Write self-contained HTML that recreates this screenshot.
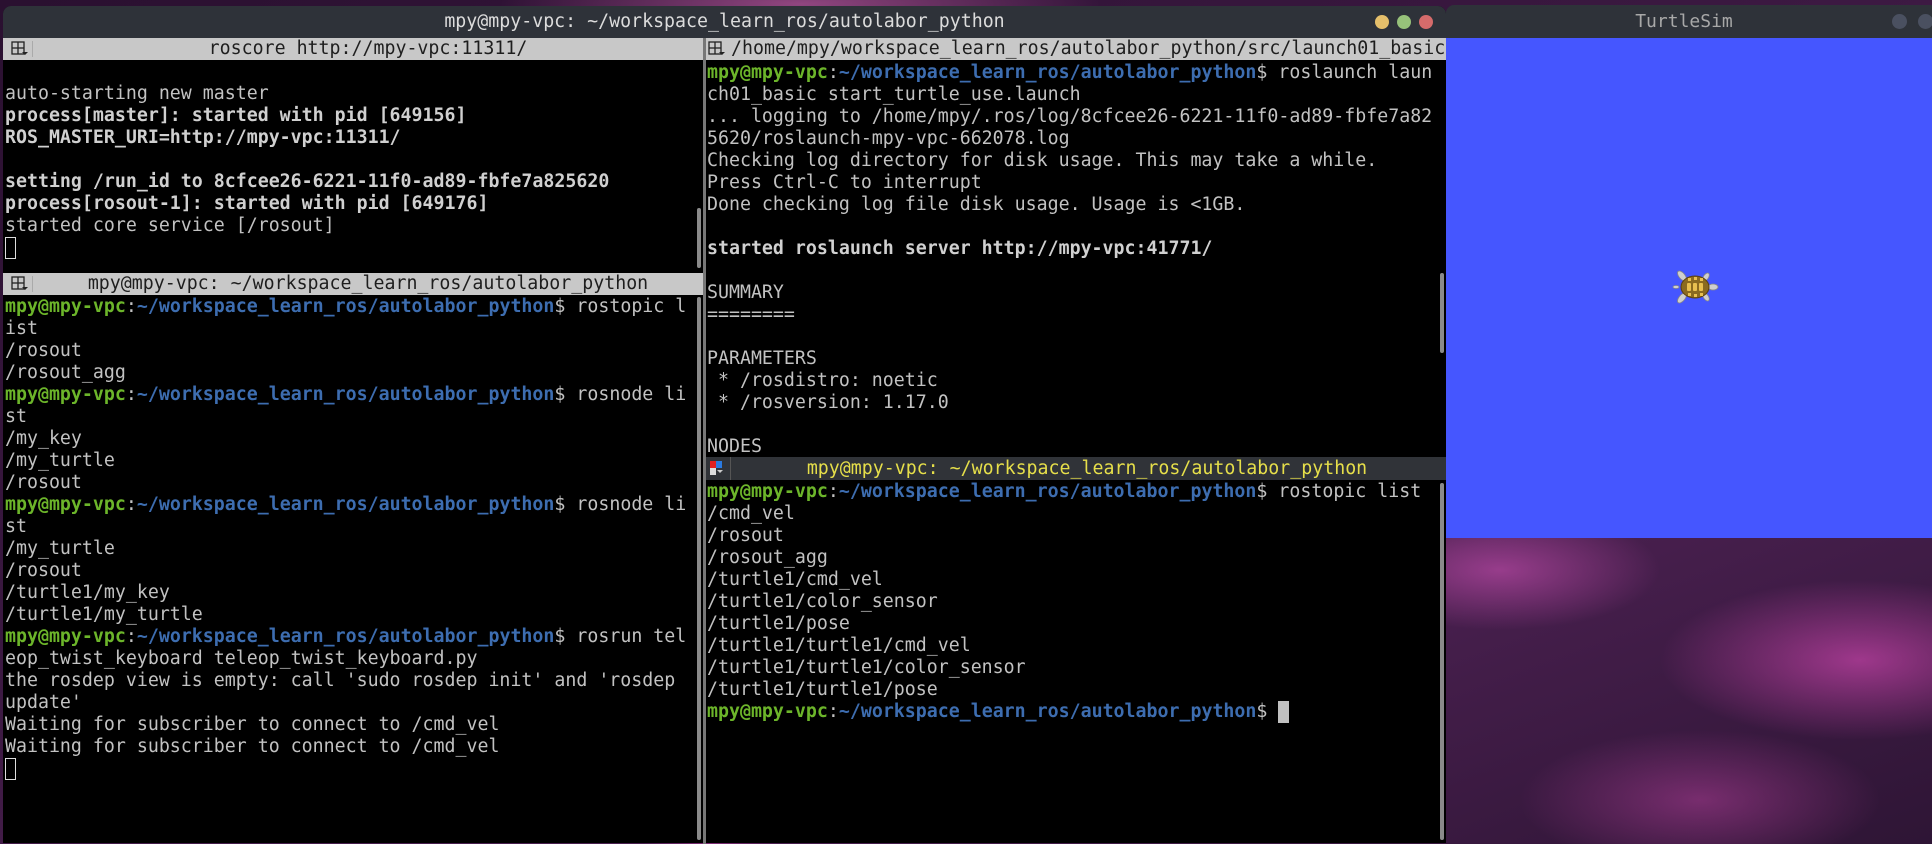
<!DOCTYPE html>
<html><head><meta charset="utf-8"><style>
*{margin:0;padding:0;box-sizing:border-box}
body{width:1932px;height:844px;overflow:hidden;position:relative;background:#2a1030;font-family:"DejaVu Sans Mono","Liberation Mono",monospace}
.abs{position:absolute}
.wall{position:absolute;inset:0;background:
linear-gradient(150deg,transparent 0,transparent 62%,rgba(230,70,190,.35) 64%,transparent 66%),
radial-gradient(ellipse 160px 60px at 1500px 570px,rgba(230,90,200,.5),transparent),
radial-gradient(ellipse 200px 80px at 1860px 660px,rgba(240,80,200,.55),transparent),
radial-gradient(ellipse 180px 70px at 1700px 800px,rgba(200,70,170,.45),transparent),
radial-gradient(ellipse 300px 40px at 800px 4px,rgba(240,120,200,.5),transparent),
linear-gradient(160deg,#2a1030 0%,#3a1840 40%,#4a2050 70%,#2e1535 100%)}
pre{font-family:"DejaVu Sans Mono","Liberation Mono",monospace;font-size:18.25px;line-height:22px;color:#c2c2c2;white-space:pre}
b{font-weight:bold;color:#d0d0d0}
.g{color:#6cb52a;font-weight:bold}
.bl{color:#3d6db0;font-weight:bold}
.hdr{position:absolute;height:22px;background:#c8c8c8;color:#1e1e1e;font-size:18.25px;line-height:22px}
.ico{position:absolute;left:4px;top:3px;width:26px;height:16px;border-right:1px solid #aaa}
.sb{position:absolute;width:4px;background:#8a8a8a;border-radius:2px}
.cur{display:inline-block;width:11px;height:22px;border:1.5px solid #ddd;vertical-align:top}
</style></head><body>
<div class="wall"></div>

<div class="abs" style="left:3px;top:6px;width:1443px;height:837px;background:#000;border-radius:8px 8px 0 0;overflow:hidden">
  <div class="abs" style="left:0;top:0;width:1443px;height:32px;background:#2e3239;color:#dcdcdc;font-size:18.25px;line-height:32px;text-align:center">mpy@mpy-vpc: ~/workspace_learn_ros/autolabor_python</div>
  <div class="abs" style="left:1372px;top:9px;width:14px;height:14px;border-radius:50%;background:#e5bf6b"></div>
  <div class="abs" style="left:1394px;top:9px;width:14px;height:14px;border-radius:50%;background:#97c27a"></div>
  <div class="abs" style="left:1416px;top:9px;width:14px;height:14px;border-radius:50%;background:#d56b6b"></div>
</div>

<div class="hdr" style="left:3px;top:38px;width:700px;text-align:center;padding-left:30px"><div class="ico"><svg width="22" height="16"><rect x="3" y="1" width="12" height="12" fill="none" stroke="#222" stroke-width="1.3"/><line x1="9" y1="1" x2="9" y2="13" stroke="#222" stroke-width="1.3"/><line x1="3" y1="7" x2="15" y2="7" stroke="#222" stroke-width="1.3"/><path d="M13 11h6l-3 3z" fill="#222"/></svg></div>roscore http://mpy-vpc:11311/</div>
<pre class="abs" style="left:5px;top:83px">auto-starting new master
<b>process[master]: started with pid [649156]</b>
<b>ROS_MASTER_URI=http://mpy-vpc:11311/</b>

<b>setting /run_id to 8cfcee26-6221-11f0-ad89-fbfe7a825620</b>
<b>process[rosout-1]: started with pid [649176]</b>
started core service [/rosout]
<span class="cur"></span></pre>
<div class="sb" style="left:697px;top:208px;height:60px"></div>

<div class="hdr" style="left:3px;top:273px;width:700px;text-align:center;padding-left:30px"><div class="ico"><svg width="22" height="16"><rect x="3" y="1" width="12" height="12" fill="none" stroke="#222" stroke-width="1.3"/><line x1="9" y1="1" x2="9" y2="13" stroke="#222" stroke-width="1.3"/><line x1="3" y1="7" x2="15" y2="7" stroke="#222" stroke-width="1.3"/><path d="M13 11h6l-3 3z" fill="#222"/></svg></div>mpy@mpy-vpc: ~/workspace_learn_ros/autolabor_python</div>
<pre class="abs" style="left:5px;top:296px"><span class="g">mpy@mpy-vpc</span>:<span class="bl">~/workspace_learn_ros/autolabor_python</span>$ rostopic l
ist
/rosout
/rosout_agg
<span class="g">mpy@mpy-vpc</span>:<span class="bl">~/workspace_learn_ros/autolabor_python</span>$ rosnode li
st
/my_key
/my_turtle
/rosout
<span class="g">mpy@mpy-vpc</span>:<span class="bl">~/workspace_learn_ros/autolabor_python</span>$ rosnode li
st
/my_turtle
/rosout
/turtle1/my_key
/turtle1/my_turtle
<span class="g">mpy@mpy-vpc</span>:<span class="bl">~/workspace_learn_ros/autolabor_python</span>$ rosrun tel
eop_twist_keyboard teleop_twist_keyboard.py
the rosdep view is empty: call 'sudo rosdep init' and 'rosdep
update'
Waiting for subscriber to connect to /cmd_vel
Waiting for subscriber to connect to /cmd_vel
<span class="cur"></span></pre>
<div class="sb" style="left:697px;top:297px;height:543px"></div>

<div class="abs" style="left:703px;top:38px;width:3px;height:806px;background:#777"></div>

<div class="hdr" style="left:706px;top:38px;width:740px;overflow:hidden;white-space:nowrap;padding-left:25px"><div class="ico" style="left:0;width:24px;border:none"><svg width="22" height="16"><rect x="3" y="1" width="12" height="12" fill="none" stroke="#222" stroke-width="1.3"/><line x1="9" y1="1" x2="9" y2="13" stroke="#222" stroke-width="1.3"/><line x1="3" y1="7" x2="15" y2="7" stroke="#222" stroke-width="1.3"/><path d="M13 11h6l-3 3z" fill="#222"/></svg></div>/home/mpy/workspace_learn_ros/autolabor_python/src/launch01_basic</div>
<pre class="abs" style="left:707px;top:62px"><span class="g">mpy@mpy-vpc</span>:<span class="bl">~/workspace_learn_ros/autolabor_python</span>$ roslaunch laun
ch01_basic start_turtle_use.launch
... logging to /home/mpy/.ros/log/8cfcee26-6221-11f0-ad89-fbfe7a82
5620/roslaunch-mpy-vpc-662078.log
Checking log directory for disk usage. This may take a while.
Press Ctrl-C to interrupt
Done checking log file disk usage. Usage is &lt;1GB.

<b>started roslaunch server http://mpy-vpc:41771/</b>

SUMMARY
========

PARAMETERS
 * /rosdistro: noetic
 * /rosversion: 1.17.0

NODES</pre>
<div class="sb" style="left:1440px;top:273px;height:80px"></div>

<div class="abs" style="left:706px;top:457px;width:740px;height:23px;background:#303338;color:#e6df4a;font-size:18.25px;line-height:23px;text-align:center;padding-left:22px">
  <div class="abs" style="left:4px;top:4px;width:14px;height:14px"><div class="abs" style="left:0;top:0;width:6px;height:7px;background:#e02020"></div><div class="abs" style="left:6px;top:0;width:6px;height:7px;background:#2a7ae0"></div><div class="abs" style="left:0;top:7px;width:6px;height:7px;background:#ddd"></div><div class="abs" style="left:7px;top:9px;width:0;height:0;border:3px solid transparent;border-top-color:#ccc"></div></div>
  <div class="abs" style="left:24px;top:0;width:1px;height:23px;background:#555"></div>
  mpy@mpy-vpc: ~/workspace_learn_ros/autolabor_python</div>
<pre class="abs" style="left:707px;top:481px"><span class="g">mpy@mpy-vpc</span>:<span class="bl">~/workspace_learn_ros/autolabor_python</span>$ rostopic list
/cmd_vel
/rosout
/rosout_agg
/turtle1/cmd_vel
/turtle1/color_sensor
/turtle1/pose
/turtle1/turtle1/cmd_vel
/turtle1/turtle1/color_sensor
/turtle1/turtle1/pose
<span class="g">mpy@mpy-vpc</span>:<span class="bl">~/workspace_learn_ros/autolabor_python</span>$ <span style="display:inline-block;width:11px;height:22px;background:#c0c0c0;vertical-align:top"></span></pre>
<div class="sb" style="left:1440px;top:483px;height:357px"></div>

<div class="abs" style="left:1446px;top:5px;width:486px;height:33px;background:#2e3239;border-radius:8px 0 0 0;color:#a8a8a8;font-size:18px;line-height:33px;text-align:center;padding-right:10px">TurtleSim
  <div class="abs" style="left:446px;top:9px;width:15px;height:15px;border-radius:50%;background:#4a5060"></div>
  <div class="abs" style="left:472px;top:9px;width:15px;height:15px;border-radius:50%;background:#4a5060"></div>
</div>
<div class="abs" style="left:1446px;top:38px;width:486px;height:500px;background:#4556ff"></div>
<svg class="abs" style="left:1670px;top:267px" width="52" height="40" viewBox="0 0 52 40">
  <g fill="#cfcfcf" stroke="#888" stroke-width="0.8">
    <ellipse cx="12" cy="9" rx="3" ry="6" transform="rotate(-40 12 9)"/>
    <ellipse cx="12" cy="31" rx="3" ry="6" transform="rotate(40 12 31)"/>
    <ellipse cx="36" cy="10" rx="2.5" ry="4.5" transform="rotate(35 36 10)"/>
    <ellipse cx="36" cy="30" rx="2.5" ry="4.5" transform="rotate(-35 36 30)"/>
    <ellipse cx="43" cy="20" rx="5" ry="3"/>
    <ellipse cx="6" cy="20" rx="3" ry="1.5"/>
  </g>
  <ellipse cx="25" cy="20" rx="14" ry="11" fill="#8a6a20" stroke="#5a4010"/>
  <g fill="#e8c050">
    <rect x="17" y="16" width="4" height="8" rx="1"/><rect x="23" y="16" width="4" height="8" rx="1"/><rect x="29" y="16" width="4" height="8" rx="1"/>
    <rect x="18" y="11" width="3" height="3"/><rect x="24" y="10" width="3" height="3"/><rect x="30" y="11" width="3" height="3"/>
    <rect x="18" y="26" width="3" height="3"/><rect x="24" y="27" width="3" height="3"/><rect x="30" y="26" width="3" height="3"/>
  </g>
</svg>
</body></html>
